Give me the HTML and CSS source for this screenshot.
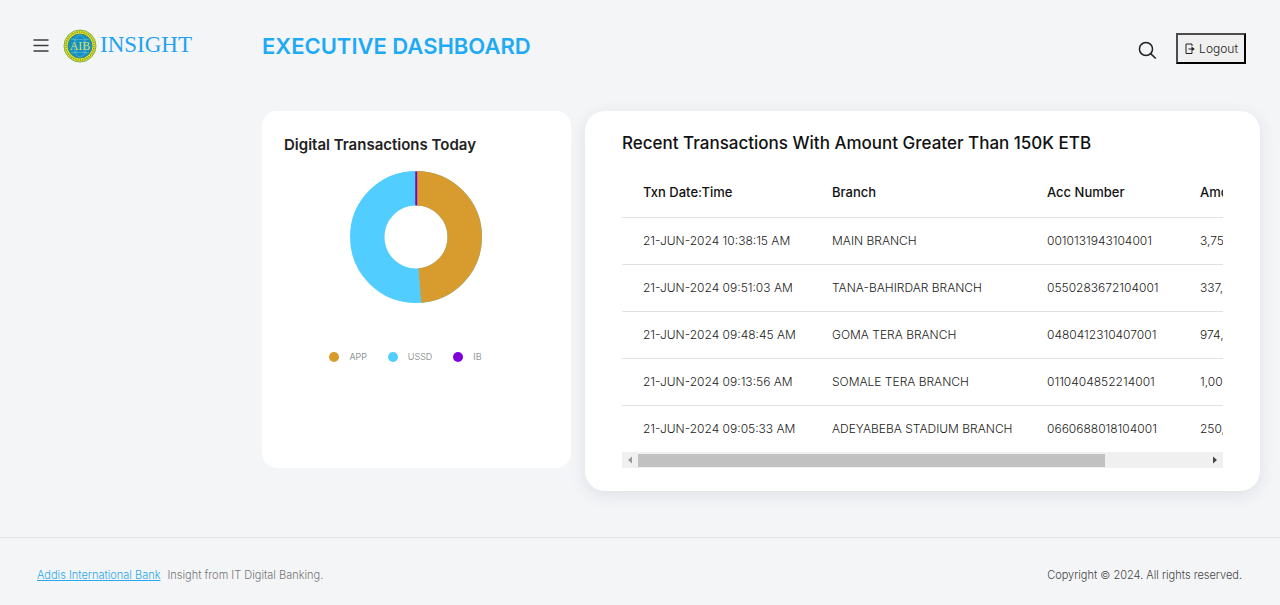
FILE: index.html
```html
<!DOCTYPE html>
<html lang="en">
<head>
<meta charset="utf-8">
<meta name="viewport" content="width=device-width, initial-scale=1">
<title>Executive Dashboard</title>
<link rel="stylesheet" href="styles.css">
</head>
<body>
<header class="navbar">
  <div class="brand-area">
    <button class="icon-button menu-button" type="button" aria-label="Toggle menu">
      <svg width="16" height="14" viewBox="0 0 16 14" fill="none" stroke="#3c3c3c" stroke-width="1.3"><path d="M0.5 1h15M0.5 6.500h15M0.5 12h15"/></svg>
    </button>
    <a class="brand" href="#">
      <svg class="seal" width="34" height="34" viewBox="0 0 34 34" aria-hidden="true">
        <circle cx="17" cy="17" r="16" fill="#e6e52c" stroke="#7fae4a" stroke-width="1"/>
        <circle cx="17" cy="17" r="14" fill="none" stroke="#8f9c24" stroke-width="1.600" stroke-dasharray="1.3 1"/>
        <circle cx="17" cy="17" r="12" fill="#168fc4" stroke="#2f8c78" stroke-width="1"/>
        <g fill="none" stroke="#70c3d2" stroke-width="0.5"><ellipse cx="17" cy="17" rx="6" ry="11"/><path d="M8 10.500h18M8 23.500h18M10 9l4 4M24 9l-4 4M10 25l4-3M24 25l-4-3"/></g>
        <text x="17" y="21.300" class="seal-text">AIB</text>
      </svg>
      <span class="brand-name">INSIGHT</span>
    </a>
  </div>
  <h1 class="page-title">EXECUTIVE DASHBOARD</h1>
  <div class="actions">
    <button class="icon-button search-button" type="button" aria-label="Search">
      <svg width="19" height="19" viewBox="0 0 20 20" fill="none" stroke="#222" stroke-width="1.6"><circle cx="8.4" cy="8.4" r="6.9"/><path d="M13.3 13.3l5.4 5.2"/></svg>
    </button>
    <button class="logout" type="button">
      <svg width="10" height="12" viewBox="0 0 10 12" fill="none" stroke="#222" stroke-width="1"><path d="M7 3V1H1v9.500h6V8.500M3.500 6H8"/><path d="M6.500 3.500L9.800 6L6.500 8.500z" fill="#222" stroke="none"/></svg>
      Logout
    </button>
  </div>
</header>
<main class="content">
  <section class="card summary">
    <h2 class="summary-title">Digital Transactions Today</h2>
    <svg class="donut" width="132" height="132" viewBox="0 0 132 132" role="img" aria-label="Share of transactions by channel">
      <g fill="none" stroke-width="34.500" transform="rotate(-90 66 66)">
        <circle cx="66" cy="66" r="48.750" stroke="#52cdff"/>
        <circle cx="66" cy="66" r="48.750" stroke="#d89b2d" pathLength="100" stroke-dasharray="48.700 51.300"/>
      </g>
      <path d="M66.200 0.500v34" stroke="#8100c0" stroke-width="1.900"/>
    </svg>
    <ul class="legend">
      <li><span class="dot dot-app"></span>APP</li>
      <li><span class="dot dot-ussd"></span>USSD</li>
      <li><span class="dot dot-ib"></span>IB</li>
    </ul>
  </section>
  <section class="card recent">
    <h2 class="recent-title">Recent Transactions With Amount Greater Than 150K ETB</h2>
    <div class="table-scroll">
      <table class="transactions">
        <colgroup><col class="col-date"><col class="col-branch"><col class="col-account"><col class="col-amount"></colgroup>
        <thead><tr><th>Txn Date:Time</th><th>Branch</th><th>Acc Number</th><th>Amount</th></tr></thead>
        <tbody>
          <tr><td>21-JUN-2024 10:38:15 AM</td><td>MAIN BRANCH</td><td>0010131943104001</td><td>3,75</td></tr>
          <tr><td>21-JUN-2024 09:51:03 AM</td><td>TANA-BAHIRDAR BRANCH</td><td>0550283672104001</td><td>337,</td></tr>
          <tr><td>21-JUN-2024 09:48:45 AM</td><td>GOMA TERA BRANCH</td><td>0480412310407001</td><td>974,</td></tr>
          <tr><td>21-JUN-2024 09:13:56 AM</td><td>SOMALE TERA BRANCH</td><td>0110404852214001</td><td>1,00</td></tr>
          <tr><td>21-JUN-2024 09:05:33 AM</td><td>ADEYABEBA STADIUM BRANCH</td><td>0660688018104001</td><td>250,</td></tr>
        </tbody>
      </table>
    </div>
    <div class="scrollbar">
      <button class="scroll-arrow" type="button" aria-label="Scroll left"><svg width="4" height="8" viewBox="0 0 4 8"><path d="M4 0.500v7L0 4z" fill="#999"/></svg></button>
      <div class="scroll-track"><div class="scroll-thumb"></div></div>
      <button class="scroll-arrow" type="button" aria-label="Scroll right"><svg width="4" height="8" viewBox="0 0 4 8"><path d="M0 0.500v7L4 4z" fill="#444"/></svg></button>
    </div>
  </section>
</main>
<footer class="footer">
  <p class="credit"><a class="bank-link" href="#">Addis International Bank</a>Insight from IT Digital Banking.</p>
  <p class="copyright">Copyright © 2024. All rights reserved.</p>
</footer>
</body>
</html>
```
FILE: styles.css
```css
* { box-sizing: border-box; }
body {
  margin: 0;
  min-height: 100vh;
  display: flex;
  flex-direction: column;
  background: #f4f5f7;
  color: #222;
  font: 300 12px/16px Inter, "Noto Sans", sans-serif;
}
h1, h2, p, ul { margin: 0; padding: 0; }
button { font: inherit; color: inherit; cursor: pointer; }
svg { display: block; flex: none; }

.navbar {
  display: grid;
  grid-template-columns: 229px 1fr auto;
  align-items: center;
  height: 91px;
  padding: 0 34px 0 33px;
}
.brand-area { display: flex; align-items: center; gap: 14px; }
.icon-button { display: flex; padding: 0; border: 0; background: none; }
.search-button { padding-top: 4px; }
.brand { display: flex; align-items: center; gap: 3px; text-decoration: none; }
.seal-text {
  font: 12px "Liberation Serif", serif;
  fill: #d5e36b;
  text-anchor: middle;
}
.brand-name {
  padding-bottom: 2px;
  color: #1fa2f2;
  font: 23px/32px "Liberation Serif", serif;
}
.page-title { color: #1faaf5; font-size: 22px; font-weight: 600; line-height: 32px; }
.actions { display: flex; align-items: center; gap: 19px; padding-top: 6px; }
.logout {
  display: flex;
  align-items: center;
  gap: 4px;
  height: 31px;
  padding: 0 6px 0 7px;
  border: 2px solid #000;
  border-color: #4c4c4c #000 #000 #4c4c4c;
  background: #f0f0f0;
}

.content {
  flex: 1;
  display: grid;
  grid-template-columns: 309fr 675fr;
  gap: 14px;
  align-items: start;
  padding: 20px 20px 46px 262px;
}
.card { min-width: 0; background: #fff; }
.summary {
  display: flex;
  flex-direction: column;
  align-items: center;
  padding: 22px 24px 103px 22px;
  border-radius: 15px;
}
.summary-title {
  align-self: stretch;
  font-size: 15px;
  font-weight: 600;
  line-height: 24px;
}
.donut { margin: 14px 0 46px; }
.legend {
  display: flex;
  gap: 21px;
  padding-right: 20px;
  color: #6b7778;
  font-size: 9px;
  list-style: none;
}
.legend li { display: flex; align-items: center; gap: 10px; }
.dot { width: 10px; height: 10px; border-radius: 50%; }
.dot-app { background: #d89b2d; }
.dot-ussd { background: #52cdff; }
.dot-ib { background: #8100d8; }

.recent {
  padding: 20px 37px 23px;
  border-radius: 20px;
  box-shadow: 0 4px 16px rgba(30, 50, 80, 0.1);
}
.recent-title {
  margin-bottom: 13px;
  color: #111;
  font-size: 17px;
  font-weight: 500;
  line-height: 24px;
}
.table-scroll { overflow: hidden; }
.transactions {
  width: 733px;
  table-layout: fixed;
  border-collapse: collapse;
  white-space: nowrap;
}
.col-date { width: 189px; }
.col-branch { width: 215px; }
.col-account { width: 153px; }
th, td {
  height: 47px;
  padding: 0 21px;
  border-bottom: 1px solid #dee2e6;
  text-align: left;
}
th { height: 49px; color: #111; font-size: 13px; font-weight: 500; }
tbody tr:last-child td { border-bottom: 0; }
.scrollbar { display: flex; height: 16px; background: #f0f0f0; }
.scroll-arrow {
  display: flex;
  align-items: center;
  justify-content: center;
  width: 16px;
  padding: 0;
  border: 0;
  background: none;
}
.scroll-track { flex: 1; padding: 2px 0 1px; }
.scroll-thumb { width: 82%; height: 100%; background: #c1c1c1; }

.footer {
  display: flex;
  align-items: center;
  justify-content: space-between;
  height: 68px;
  padding: 6px 38px 0 37px;
  border-top: 1px solid #e1e3e6;
  color: #444;
  font-size: 11px;
}
.credit { color: #777; }
.bank-link { margin-right: 7px; color: #2ba8ee; }
```
